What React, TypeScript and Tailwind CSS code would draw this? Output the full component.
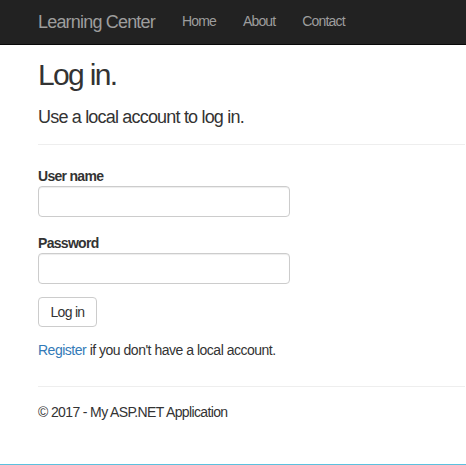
export default function App() {
	return (
		<div className="h-[465px] w-[466px] overflow-hidden bg-white font-['Liberation_Sans',Arial,sans-serif] text-[14px] tracking-[-0.05em] text-[#333]">
			<nav className="flex h-[45px] items-center gap-[27px] border-b border-[#080808] bg-[#222] pl-[38px]">
				<span className="text-[18px] leading-[20px] tracking-[-0.045em] text-[#9d9d9d]">Learning Center</span>
				<span className="-mt-[2px] text-[14px] leading-[20px] tracking-[-0.06em] text-[#9d9d9d]">Home</span>
				<span className="-mt-[2px] text-[14px] leading-[20px] tracking-[-0.06em] text-[#9d9d9d]">About</span>
				<span className="-mt-[2px] text-[14px] leading-[20px] tracking-[-0.06em] text-[#9d9d9d]">Contact</span>
			</nav>

			<main className="pl-[38px] pr-px">
				<h2 className="mt-[13px] text-[30px] leading-[33px] font-normal tracking-[-0.055em]">Log in.</h2>
				<h4 className="mt-[16px] text-[18px] leading-[20px] font-normal tracking-[-0.045em]">
					Use a local account to log in.
				</h4>
				<hr className="mt-[17px] border-t border-[#eee]" />

				<form className="flex flex-col">
					<label className="mt-[21px] text-[14px] leading-[20px] font-bold">User name</label>
					<input
						type="text"
						className="h-[31px] w-[252px] rounded-[4px] border border-[#ccc] bg-white px-3 shadow-[inset_0_1px_1px_rgba(0,0,0,0.075)] outline-none"
					/>
					<label className="mt-[16px] text-[14px] leading-[20px] font-bold">Password</label>
					<input
						type="password"
						className="h-[31px] w-[252px] rounded-[4px] border border-[#ccc] bg-white px-3 shadow-[inset_0_1px_1px_rgba(0,0,0,0.075)] outline-none"
					/>
					<button
						type="button"
						className="mt-[13px] h-[30px] w-[59px] rounded-[4px] border border-[#ccc] bg-white text-[14px] leading-[20px] text-[#333]"
					>
						Log in
					</button>
				</form>

				<p className="mt-[13px] leading-[20px] tracking-[-0.035em]">
					<a href="#" className="text-[#337ab7]">
						Register
					</a>{" "}
					if you don't have a local account.
				</p>

				<hr className="mt-[26px] border-t border-[#eee]" />
				<footer>
					<p className="mt-[15px] leading-[20px] tracking-[-0.045em]">© 2017 - My ASP.NET Application</p>
				</footer>
			</main>
			<div className="mt-[42px] h-px w-full bg-[#5bc0de]" />
		</div>
	);
}
